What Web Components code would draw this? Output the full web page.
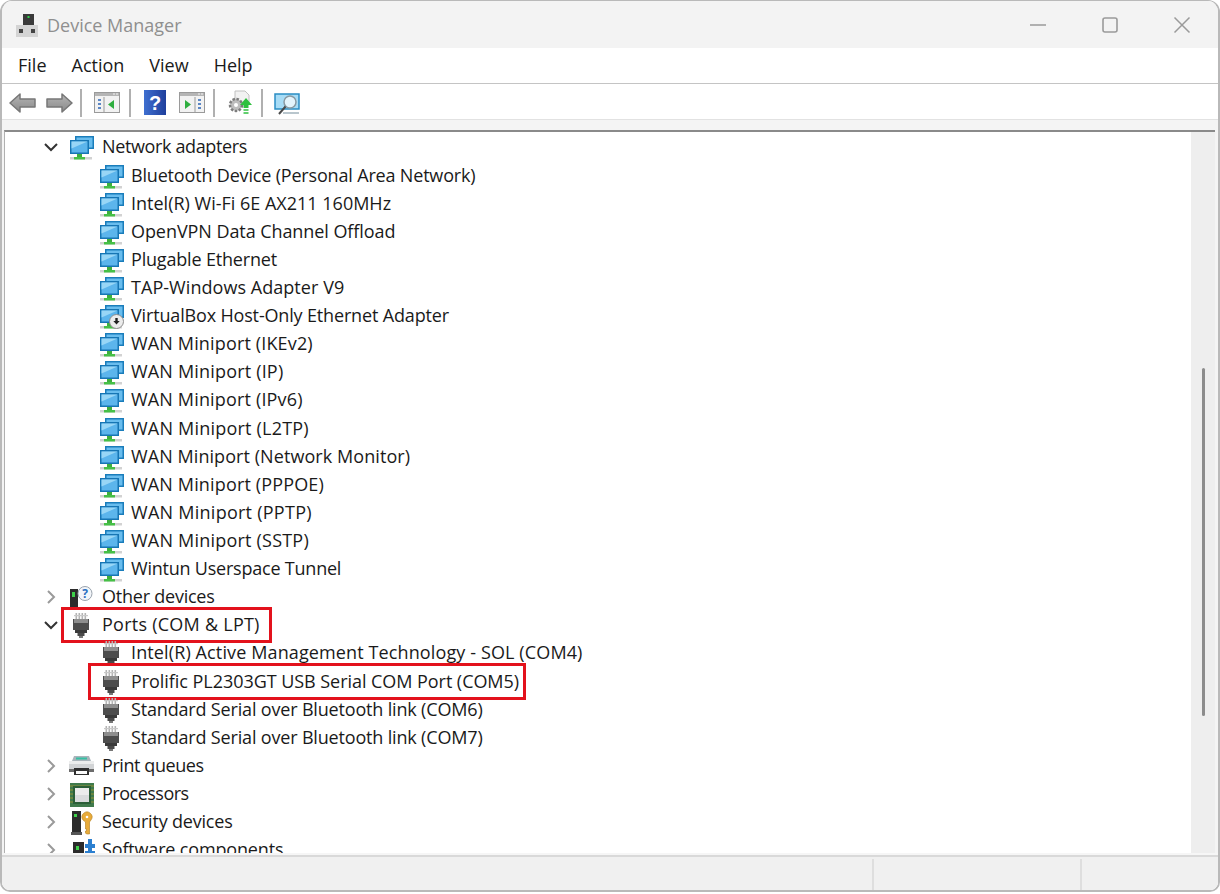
<!DOCTYPE html>
<html>
<head>
<meta charset="utf-8">
<title>Device Manager</title>
<style>
  html, body { margin: 0; height: 100%; background: #fff; }
  body { font-family: "Open Sans", "Noto Sans", sans-serif; color: #1a1a1a; overflow: hidden; }
</style>
</head>
<body>

<dm-window>
  <dm-titlebar slot="title" label="Device Manager"></dm-titlebar>
  <dm-menubar slot="menu">
    <dm-menu-item>File</dm-menu-item>
    <dm-menu-item>Action</dm-menu-item>
    <dm-menu-item>View</dm-menu-item>
    <dm-menu-item>Help</dm-menu-item>
  </dm-menubar>
  <dm-toolbar slot="tools"></dm-toolbar>
  <dm-tree slot="tree">
    <!-- letter-spacing per row: the reference font is not installed, this keeps the line ends in place -->
    <dm-row level="1" toggle="open" icon="net" style="letter-spacing:-.37px">Network adapters</dm-row>
    <dm-row level="2" icon="net" style="letter-spacing:-.175px">Bluetooth Device (Personal Area Network)</dm-row>
    <dm-row level="2" icon="net">Intel(R) Wi-Fi 6E AX211 160MHz</dm-row>
    <dm-row level="2" icon="net" style="letter-spacing:-.07px">OpenVPN Data Channel Offload</dm-row>
    <dm-row level="2" icon="net" style="letter-spacing:-.18px">Plugable Ethernet</dm-row>
    <dm-row level="2" icon="net" style="letter-spacing:.05px">TAP-Windows Adapter V9</dm-row>
    <dm-row level="2" icon="netdown" style="letter-spacing:-.16px">VirtualBox Host-Only Ethernet Adapter</dm-row>
    <dm-row level="2" icon="net" style="letter-spacing:.15px">WAN Miniport (IKEv2)</dm-row>
    <dm-row level="2" icon="net" style="letter-spacing:.18px">WAN Miniport (IP)</dm-row>
    <dm-row level="2" icon="net" style="letter-spacing:.16px">WAN Miniport (IPv6)</dm-row>
    <dm-row level="2" icon="net" style="letter-spacing:.21px">WAN Miniport (L2TP)</dm-row>
    <dm-row level="2" icon="net" style="letter-spacing:.07px">WAN Miniport (Network Monitor)</dm-row>
    <dm-row level="2" icon="net" style="letter-spacing:.15px">WAN Miniport (PPPOE)</dm-row>
    <dm-row level="2" icon="net" style="letter-spacing:.26px">WAN Miniport (PPTP)</dm-row>
    <dm-row level="2" icon="net" style="letter-spacing:.21px">WAN Miniport (SSTP)</dm-row>
    <dm-row level="2" icon="net" style="letter-spacing:-.22px">Wintun Userspace Tunnel</dm-row>
    <dm-row level="1" toggle="closed" icon="other" style="letter-spacing:-.23px">Other devices</dm-row>
    <dm-row level="1" toggle="open" icon="port" marked style="letter-spacing:.25px">Ports (COM &amp; LPT)</dm-row>
    <dm-row level="2" icon="port" style="letter-spacing:.12px">Intel(R) Active Management Technology - SOL (COM4)</dm-row>
    <dm-row level="2" icon="port" marked style="letter-spacing:-.05px">Prolific PL2303GT USB Serial COM Port (COM5)</dm-row>
    <dm-row level="2" icon="port" style="letter-spacing:-.17px">Standard Serial over Bluetooth link (COM6)</dm-row>
    <dm-row level="2" icon="port" style="letter-spacing:-.17px">Standard Serial over Bluetooth link (COM7)</dm-row>
    <dm-row level="1" toggle="closed" icon="printer" style="letter-spacing:-.42px">Print queues</dm-row>
    <dm-row level="1" toggle="closed" icon="cpu" style="letter-spacing:-.5px">Processors</dm-row>
    <dm-row level="1" toggle="closed" icon="security" style="letter-spacing:-.19px">Security devices</dm-row>
    <dm-row level="1" toggle="closed" icon="software" style="letter-spacing:-.16px">Software components</dm-row>
  </dm-tree>
  <dm-statusbar slot="status"></dm-statusbar>
</dm-window>

<script>
// ---------------------------------------------------------------------------
// Icons
// ---------------------------------------------------------------------------

const NET_ICON = `
  <path d="M6 1h19v13H6z" fill="#1a7dbb"/>
  <path d="M7.500 2.500h16v10h-16z" fill="#69bdee"/>
  <path d="M1 5h19v14H1z" fill="#1776b4"/>
  <path d="M2.500 6.500h16v11h-16z" fill="#5cb5ec"/>
  <path d="M2.500 6.500h16l-16 7z" fill="#98d6f6"/>
  <path d="M8 19h5v3H8z" fill="#3fae3f"/>
  <path d="M1 22h22v2.500H1z" fill="#d2d2d2"/>
  <path d="M5 22h11v2.500H5z" fill="#46c046"/>`;

const PORT_ICON = `
  <path d="M6.500 0h1.600v6H6.500zM9.500 0h1.600v6H9.500zM12.500 0h1.600v6h-1.600zM15.500 0h1.600v6h-1.600z" fill="#b4b4b4"/>
  <path d="M5 2h14v1.200H5z" fill="#c8c8c8"/>
  <path d="M4 6h16v11H4z" fill="#4d4d4d"/>
  <path d="M5 6h14v4H5z" fill="#8e8e8e"/>
  <path d="M6 17h12v3H6z" fill="#3a3a3a"/>
  <path d="M8.500 20h7v3h-7z" fill="#4a4a4a"/>
  <path d="M10 23h4v2h-4z" fill="#777"/>`;

const ICONS = {
  net: NET_ICON,
  netdown: NET_ICON + `
    <circle cx="17.500" cy="17.500" r="7" fill="#ececec" stroke="#8c8c8c"/>
    <path d="M16.300 14h2.400v3h2l-3.200 3.500-3.200-3.500h2z" fill="#222"/>`,
  port: PORT_ICON,
  other: `
    <path d="M1 4h8v21H1z" fill="#2b2b2b"/>
    <path d="M3 7h3v5H3z" fill="#3ed04a"/>
    <circle cx="16" cy="8.500" r="7" fill="#f3f6fa" stroke="#9aa3ad"/>
    <text x="16" y="13" font-size="12" font-weight="700" fill="#2a6fc0" text-anchor="middle" font-family="Open Sans, sans-serif">?</text>`,
  printer: `
    <path d="M5 2h15l2 5H3z" fill="#a9b4ba"/>
    <path d="M7 3.500h11v2H7z" fill="#35c0a4"/>
    <path d="M0 7h25v11H0z" fill="#d2d4d6"/>
    <path d="M0 7h25v3H0z" fill="#eceded"/>
    <path d="M0 15h25v3H0z" fill="#6c6c6c"/>
    <path d="M5 14h15v7H5z" fill="#2f2f2f"/>
    <path d="M7 17h11v3H7z" fill="#fafafa"/>`,
  cpu: `
    <rect x="1" y="1" width="24" height="24" fill="#3f7a4c"/>
    <path d="M1 4h24M1 8h24M1 12h24M1 16h24M1 20h24" stroke="#c9a227" stroke-width=".6"/>
    <rect x="4" y="4" width="18" height="18" fill="#2b5f38"/>
    <rect x="6" y="6" width="14" height="14" fill="#d9dbdc"/>
    <rect x="6" y="6" width="14" height="7" fill="#ececec"/>`,
  security: `
    <path d="M3 1h9v21H3z" fill="#2b2b2b"/>
    <path d="M5 4h3v3H5z" fill="#3ed04a"/>
    <path d="M2 22h11v3H2z" fill="#555"/>
    <path d="M14 10a5 5 0 1 1 8 0l-1.500 2v12h-3l-1-1v-2h1v-2h-1v-7z" fill="#e8ab3a" stroke="#b27e1e" stroke-width=".6"/>
    <circle cx="18" cy="7" r="1.300" fill="#fff"/>`,
  software: `
    <path d="M4 4h11v21H4z" fill="#2b2b2b"/>
    <path d="M7 8h3v4H7z" fill="#3ed04a"/>
    <path d="M16 6h3V1h4v5h3v4h-3v3h3v4H16v-4h3v-3h-3z" fill="#2b7fd0"/>`,
};

const ARROW_FILL = `<linearGradient id="steel" x1="0" y1="0" x2="0" y2="1"><stop offset="0" stop-color="#b5b5b5"/><stop offset="1" stop-color="#8a8a8a"/></linearGradient>`;

// ---------------------------------------------------------------------------
// Elements
// ---------------------------------------------------------------------------

class DmElement extends HTMLElement {
  /** Returns the shadow markup. Override in subclass. */
  template() { return ''; }

  connectedCallback() {
    if (!this.shadowRoot) this.attachShadow({ mode: 'open' });
    this.shadowRoot.innerHTML = this.template();
  }
}

class DmWindow extends DmElement {
  template() {
    return `<style>
      :host { display: flex; flex-direction: column; box-sizing: border-box; height: 892px;
              border: 2px solid #b9b9b9; border-top-width: 1px; border-radius: 12px 12px 10px 10px;
              overflow: hidden; background: #fff; }
      .view { display: flex; flex-direction: column; flex: 1; min-height: 0; }
    </style>
    <slot name="title"></slot>
    <slot name="menu"></slot>
    <slot name="tools"></slot>
    <div class="view"><slot name="tree"></slot></div>
    <slot name="status"></slot>`;
  }
}

class DmTitlebar extends DmElement {
  template() {
    return `<style>
      :host { display: flex; align-items: center; height: 47px; flex: none; background: #f3f3f3; padding-left: 13px; color: #8f8f8f; font-size: 18px; }
      svg { display: block; flex: none; }
      .app { width: 24px; height: 24px; margin-right: 8px; }
      .label { flex: 1; }
      .btn { width: 72px; display: flex; justify-content: center; }
    </style>
    <svg class="app" viewBox="0 0 24 24">
      <path d="M8 1h11v11H8z" fill="#3a3a3a"/>
      <path d="M12.500 3h2v2h-2z" fill="#2fd04a"/>
      <path d="M1 12h22v12H1z" fill="#d4d4d4"/>
      <path d="M4 16h4v4H4zM16 16h4v4h-4z" fill="#444"/>
    </svg>
    <span class="label">${this.getAttribute('label')}</span>
    <span class="btn"><svg width="18" height="18" viewBox="0 0 18 18"><path d="M1 9h16" stroke="#9a9a9a" stroke-width="1.600"/></svg></span>
    <span class="btn"><svg width="18" height="18" viewBox="0 0 18 18"><rect x="2" y="2" width="14" height="14" rx="2" fill="none" stroke="#9a9a9a" stroke-width="1.600"/></svg></span>
    <span class="btn"><svg width="18" height="18" viewBox="0 0 18 18"><path d="M1.500 1.500l15 15M16.500 1.500l-15 15" stroke="#9a9a9a" stroke-width="1.500"/></svg></span>`;
  }
}

class DmMenubar extends DmElement {
  template() {
    return `<style>
      :host { display: flex; align-items: center; gap: 25px; flex: none; padding-left: 16px; padding-bottom: 1px; box-sizing: border-box; height: 36px;
              background: #fff; border-bottom: 1px solid #c4c4c4; font-size: 18px; }
    </style><slot></slot>`;
  }
}

class DmMenuItem extends DmElement {
  template() {
    return `<style>:host { display: block; color: #1a1a1a; }</style><slot></slot>`;
  }
}

class DmToolbar extends DmElement {
  template() {
    const pane = (body) => `
      <rect x=".5" y=".5" width="25" height="20" fill="#f2f2f2" stroke="#9a9a9a"/>
      <path d="M1 1h24v3H1z" fill="#b5b5b5"/>
      <path d="M19 2h2M22 2h2" stroke="#f2f2f2"/>${body}`;
    return `<style>
      :host { display: flex; align-items: center; box-sizing: border-box; height: 36px; flex: none; padding: 2px 0 0 7px; background: #fff;
              border-bottom: 1px solid #e2e2e2; }
      svg { display: block; flex: none; }
      .sep { width: 2px; height: 28px; background: #b0b0b0; flex: none; }
    </style>
    <svg width="28" height="20" viewBox="0 0 28 20" style="margin-right:8px">
      <defs>${ARROW_FILL}</defs>
      <path d="M1 10l10-9v5h15v8H11v5z" fill="url(#steel)" stroke="#777" stroke-width="1.500" stroke-linejoin="round"/>
    </svg>
    <svg width="28" height="20" viewBox="0 0 28 20" style="margin-right:7px">
      <path d="M27 10L17 1v5H2v8h15v5z" fill="url(#steel)" stroke="#777" stroke-width="1.500" stroke-linejoin="round"/>
    </svg>
    <span class="sep" style="margin-right:12px"></span>
    <svg width="26" height="21" viewBox="0 0 26 21" style="margin-right:9px">
      ${pane(`<path d="M10 5v15" stroke="#9a9a9a"/><path d="M4 7h3v2H4zM4 11h3v2H4zM4 15h3v2H4z" fill="#5b86c4"/><path d="M20 8v9l-6-4.500z" fill="#2fae3f"/>`)}
    </svg>
    <span class="sep" style="margin-right:13px"></span>
    <svg width="22" height="25" viewBox="0 0 22 25" style="margin-right:13px">
      <defs><linearGradient id="book" x1="0" y1="0" x2="1" y2="0"><stop offset="0" stop-color="#3f6fd0"/><stop offset="1" stop-color="#1f3f9c"/></linearGradient></defs>
      <rect width="22" height="25" fill="url(#book)"/>
      <text x="11" y="20" font-family="Liberation Sans, sans-serif" font-size="20" font-weight="700" fill="#fff" text-anchor="middle">?</text>
    </svg>
    <svg width="26" height="21" viewBox="0 0 26 21" style="margin-right:8px">
      ${pane(`<path d="M16 5v15" stroke="#9a9a9a"/><path d="M19 7h3v2h-3zM19 11h3v2h-3zM19 15h3v2h-3z" fill="#5b86c4"/><path d="M6 8v9l6-4.500z" fill="#2fae3f"/>`)}
    </svg>
    <span class="sep" style="margin-right:12px"></span>
    <svg width="26" height="25" viewBox="0 0 26 25" style="margin-right:8px">
      <path d="M8 1h10l4 4v8H8z" fill="#f2f2f2" stroke="#c0c0c0"/>
      <circle cx="9" cy="15" r="6" fill="#bdbdbd" stroke="#7d7d7d" stroke-width="2.500" stroke-dasharray="2.500 1.500"/><circle cx="9" cy="15" r="2" fill="#fff"/>
      <path d="M19 8l6 7h-3.500v3h-5v-3H13z" fill="#2fc03f"/><path d="M16.500 20h5M16.500 23h5" stroke="#2fc03f" stroke-width="1.500"/>
    </svg>
    <span class="sep" style="margin-right:11px"></span>
    <svg width="26" height="23" viewBox="0 0 26 23" style="margin-top:3px">
      <path d="M1 1h24v15H1z" fill="#a7dcf6" stroke="#2a8dc4" stroke-width="1.500"/>
      <circle cx="16" cy="9" r="6" fill="#e4f4fc" stroke="#8a9aa3" stroke-width="1.500"/>
      <path d="M11.500 13.500L5 21" stroke="#4a4a4a" stroke-width="2"/><path d="M9 19h16v2H9z" fill="#b9c6cd"/>
    </svg>`;
  }
}

class DmTree extends DmElement {
  template() {
    return `<style>
      :host { display: flex; flex: 1; min-height: 0; background: #f4f4f4; padding: 10px 3px 0 2px; }
      .frame { display: flex; flex: 1; min-width: 0; border-top: 2px solid #8a8a8a; border-left: 1px solid #b0b0b0; }
      .list { flex: 1; min-width: 0; overflow: hidden; background: #fff; padding-top: 1.400px; }
      .track { flex: none; width: 24px; background: #eeeeee; }
      .thumb { width: 3px; height: 348px; margin: 236px 0 0 11px; border-radius: 2px; background: #8c8c8c; }
    </style>
    <div class="frame">
      <div class="list"><slot></slot></div>
      <div class="track"><div class="thumb"></div></div>
    </div>`;
  }
}

class DmRow extends DmElement {
  template() {
    const level = Number(this.getAttribute('level'));
    const toggle = this.getAttribute('toggle');
    const chevron = toggle === 'open'
      ? '<path d="M2 5l6 6 6-6" stroke="#333" stroke-width="2" fill="none"/>'
      : '<path d="M5 2l6 6-6 6" stroke="#9a9a9a" stroke-width="2" fill="none"/>';
    const indent = level === 1 ? 38 : 94;
    const box = this.hasAttribute('marked') ? '<span class="mark"></span>' : '';
    return `<style>
      :host { display: flex; align-items: center; position: relative; height: 28.120px; font-size: 18px; white-space: nowrap; color: #1a1a1a; }
      .tog { width: 16px; height: 16px; flex: none; margin-left: ${indent}px; margin-right: ${level === 1 ? 10 : 0}px; display: ${toggle ? 'block' : 'none'}; }
      .ico { width: 26px; height: 26px; flex: none; margin-left: ${toggle ? 0 : indent}px; margin-right: ${level === 1 ? 7 : 6}px; margin-top: 2px; }
      .txt { padding-bottom: 2px; }
      .mark { position: absolute; top: -4px; bottom: -4px; left: ${level === 1 ? 56 : 83}px; border: 3px solid #e3121c; box-sizing: border-box;
              width: ${level === 1 ? 211 : 438}px; pointer-events: none; }
    </style>
    <svg class="tog" viewBox="0 0 16 16">${chevron}</svg>
    <svg class="ico" viewBox="0 0 26 26">${ICONS[this.getAttribute('icon')]}</svg>
    <span class="txt"><slot></slot></span>${box}`;
  }
}

class DmStatusbar extends DmElement {
  template() {
    return `<style>
      :host { display: block; height: 37px; box-sizing: border-box; flex: none; background: #f6f6f6; padding-top: 2px; }
      .bar { display: flex; box-sizing: border-box; height: 35px; background: #f0f0f0; border-top: 2px solid #d9d9d9; padding-top: 2px; }
      .bar div { border-left: 2px solid #dedede; }
      .bar .a { flex: 1; border: 0; }
      .bar .b { width: 206px; }
      .bar .c { width: 136px; }
    </style>
    <div class="bar"><div class="a"></div><div class="b"></div><div class="c"></div></div>`;
  }
}

customElements.define('dm-window', DmWindow);
customElements.define('dm-titlebar', DmTitlebar);
customElements.define('dm-menubar', DmMenubar);
customElements.define('dm-menu-item', DmMenuItem);
customElements.define('dm-toolbar', DmToolbar);
customElements.define('dm-tree', DmTree);
customElements.define('dm-row', DmRow);
customElements.define('dm-statusbar', DmStatusbar);
</script>
</body>
</html>
